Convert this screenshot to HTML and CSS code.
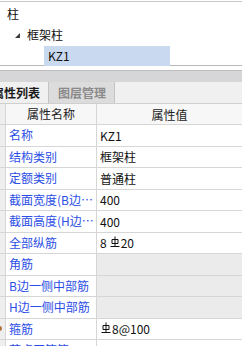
FILE: index.html
```html
<!DOCTYPE html>
<html lang="zh-CN">
<head>
    <meta charset="UTF-8">
    <title>属性列表</title>
    <link rel="stylesheet" href="styles.css">
</head>
<body>
    <div class="tree">
        <div class="node level0">柱</div>
        <div class="node level1"><span class="twist"></span>框架柱</div>
        <div class="node level2"><span class="label selected">KZ1</span></div>
    </div>
    <div class="gap"></div>
    <div class="band"></div>

    <div class="tabs">
        <div class="tab active">属性列表</div>
        <div class="tab">图层管理</div>
    </div>

    <div class="grid">
        <div class="row head">
            <div class="lead"></div>
            <div class="name">属性名称</div>
            <div class="value">属性值</div>
        </div>
        <div class="row">
            <div class="lead"></div>
            <div class="name">名称</div>
            <div class="value">KZ1</div>
        </div>
        <div class="row">
            <div class="lead"></div>
            <div class="name">结构类别</div>
            <div class="value">框架柱</div>
        </div>
        <div class="row">
            <div class="lead"></div>
            <div class="name">定额类别</div>
            <div class="value">普通柱</div>
        </div>
        <div class="row">
            <div class="lead"></div>
            <div class="name">截面宽度(B边)(mm)</div>
            <div class="value">400</div>
        </div>
        <div class="row">
            <div class="lead"></div>
            <div class="name">截面高度(H边)(mm)</div>
            <div class="value">400</div>
        </div>
        <div class="row">
            <div class="lead"></div>
            <div class="name">全部纵筋</div>
            <div class="value">8<svg class="bar" width="10" height="11" viewBox="0 0 10 11"><path d="M5 0.5V10M2 3.5H8V7.5H2ZM0.5 10.5H9.5" fill="none" stroke="#111" stroke-width="1"/></svg>20</div>
        </div>
        <div class="row">
            <div class="lead"></div>
            <div class="name">角筋</div>
            <div class="value blank"></div>
        </div>
        <div class="row">
            <div class="lead"></div>
            <div class="name">B边一侧中部筋</div>
            <div class="value blank"></div>
        </div>
        <div class="row">
            <div class="lead"></div>
            <div class="name">H边一侧中部筋</div>
            <div class="value blank"></div>
        </div>
        <div class="row">
            <div class="lead"><span class="marker"></span></div>
            <div class="name">箍筋</div>
            <div class="value"><svg class="bar first" width="10" height="11" viewBox="0 0 10 11"><path d="M5 0.5V10M2 3.5H8V7.5H2ZM0.5 10.5H9.5" fill="none" stroke="#111" stroke-width="1"/></svg>8@100</div>
        </div>
        <div class="row">
            <div class="lead"></div>
            <div class="name">节点区箍筋</div>
            <div class="value"></div>
        </div>
    </div>
</body>
</html>
```

FILE: styles.css
```css
body {
    margin: 0;
    width: 242px;
    height: 346px;
    overflow: hidden;
    background: #ffffff;
    font-family: "Noto Sans CJK SC", "Noto Sans", sans-serif;
    font-size: 12px;
    color: #111;
}

.tree {
    margin-top: 1px;
    border-top: 1px solid #c9c9cc;
    border-bottom: 1px solid #b9b9bc;
    height: 65px;
    padding-top: 1px;
    box-sizing: border-box;
}

.node {
    height: 21px;
    line-height: 21px;
    display: flex;
    align-items: center;
}

.level0 {
    padding-left: 7px;
}

.level1 {
    padding-left: 15px;
}

.level2 {
    padding-left: 44px;
}

.twist {
    width: 0;
    height: 0;
    border-left: 5px solid transparent;
    border-bottom: 5px solid #3c3c3c;
    margin-right: 7px;
    margin-top: 1px;
}

.label {
    display: block;
    width: 126px;
    height: 20px;
    line-height: 20px;
    padding-left: 4px;
    box-sizing: border-box;
}

.selected {
    background: #c9daf0;
}

.gap {
    height: 4px;
}

.band {
    height: 11px;
    border-top: 1px solid #bdbdc0;
    background: #d6d6d8;
}

.tabs {
    display: flex;
    height: 22px;
    background: #f0f0f0;
    border-bottom: 1px solid #cfcfcf;
    box-sizing: border-box;
}

.tab {
    padding: 0 8px 0 9px;
    line-height: 21px;
    font-weight: bold;
    color: #8a8a8a;
    background: #dcdcdc;
    border-right: 1px solid #c4c4c4;
}

.tab.active {
    margin-left: -17px;
    color: #1a1a1a;
    background: #f0f0f0;
}

.row {
    display: grid;
    grid-template-columns: 6px 91px 1fr;
    height: 21.5px;
    border-bottom: 1px solid #d6d6d6;
    box-sizing: border-box;
}

.row > div {
    display: flex;
    align-items: center;
    white-space: nowrap;
    overflow: hidden;
}

.lead {
    position: relative;
    background: #eeeeef;
    border-right: 1px solid #d6d6d6;
}

.marker {
    position: absolute;
    left: -3px;
    top: 7px;
    width: 5px;
    height: 5px;
    border-radius: 50%;
    background: #b0703a;
}

.name {
    padding-left: 3px;
    color: #2b4ee6;
    border-right: 1px solid #d6d6d6;
}

.row .name {
    display: block;
    line-height: 20px;
    text-overflow: ellipsis;
}

.value {
    padding-left: 3px;
}

.blank {
    background: #ebebeb;
}

.head {
    height: 21px;
    background: #f7f7f7;
}

.head .name,
.row.head .name {
    color: #222;
    text-align: center;
    padding-left: 0;
}

.head .value {
    justify-content: center;
    padding-left: 0;
    color: #222;
}

.bar {
    margin: 0 1px 2px 3px;
}

.bar.first {
    margin-left: 1px;
}
```
